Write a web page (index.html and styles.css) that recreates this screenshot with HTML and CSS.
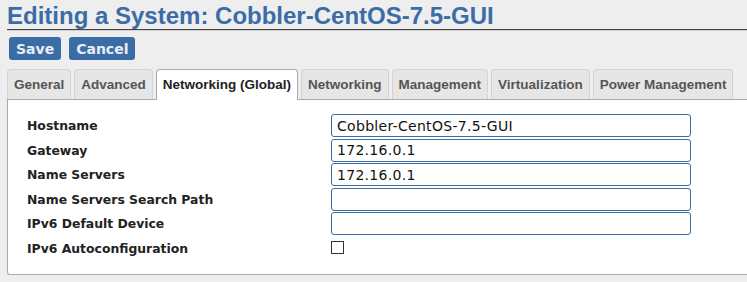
FILE: index.html
```html
<!DOCTYPE html>
<html lang="en">
<head>
  <meta charset="UTF-8" />
  <title>Editing a System</title>
<link rel="stylesheet" href="styles.css">
</head>
<body>

<div class="page">
  <h1 class="title">Editing a System: Cobbler-CentOS-7.5-GUI</h1>

  <div class="actions">
    <button class="btn">Save</button>
    <button class="btn">Cancel</button>
  </div>

  <ul class="tabs">
    <li class="tab">General</li>
    <li class="tab">Advanced</li>
    <li class="tab active">Networking (Global)</li>
    <li class="tab">Networking</li>
    <li class="tab">Management</li>
    <li class="tab">Virtualization</li>
    <li class="tab">Power Management</li>
  </ul>

  <div class="panel">
    <div class="form-grid">
      <label class="field-label">Hostname</label>
      <input class="field" type="text" value="Cobbler-CentOS-7.5-GUI" />

      <label class="field-label">Gateway</label>
      <input class="field" type="text" value="172.16.0.1" />

      <label class="field-label">Name Servers</label>
      <input class="field" type="text" value="172.16.0.1" />

      <label class="field-label">Name Servers Search Path</label>
      <input class="field" type="text" value="" />

      <label class="field-label">IPv6 Default Device</label>
      <input class="field" type="text" value="" />

      <label class="field-label">IPv6 Autoconfiguration</label>
      <input class="check" type="checkbox" />
    </div>
  </div>
</div>

</body>
</html>
```

FILE: styles.css
```css
:root {
  --blue: #3a6ca6;
  --page: #eeeeee;
  --text: #222;
  --tab: #e6e6e6;
  --tab-border: #d3d3d3;
  --panel-border: #aaa;
}

* {
  box-sizing: border-box;
}

body {
  margin: 0;
  padding-left: 7px;
  background-color: var(--page);
  color: var(--text);
  overflow: hidden;
}

/* Titulo */
.title {
  margin: 0;
  padding-top: 2px;
  font-family: "Liberation Sans", Arial, sans-serif;
  font-size: 24px;
  font-weight: bold;
  line-height: 27px;
  color: var(--blue);
  border-bottom: 1px solid #444;
  box-shadow: 0 1px 0 #d2d2d2;
}

.actions {
  display: flex;
  gap: 8px;
  margin: 7px 0 0 2px;
}

.btn {
  height: 23px;
  padding: 0 7px;
  border: none;
  border-radius: 3px;
  background-color: var(--blue);
  color: #e9eef4;
  font-family: "DejaVu Sans", Verdana, sans-serif;
  font-size: 14px;
  font-weight: bold;
  cursor: pointer;
}

/* Abas */
.tabs {
  display: flex;
  align-items: flex-start;
  gap: 3px;
  list-style: none;
  margin: 9px 0 0;
  padding: 0;
  position: relative;
  z-index: 1;
}

.tab {
  height: 30px;
  padding: 0 6px;
  border: 1px solid var(--tab-border);
  border-bottom: none;
  border-radius: 4px 4px 0 0;
  background-color: var(--tab);
  color: #555;
  font-family: "Liberation Sans", Arial, sans-serif;
  font-size: 13.5px;
  font-weight: bold;
  line-height: 29px;
  white-space: nowrap;
  cursor: pointer;
}

.tab.active {
  height: 31px;
  margin-bottom: -1px;
  background-color: #fff;
  border-color: var(--panel-border);
  color: var(--text);
}

/* Painel do formulario (continua alem da borda direita) */
.panel {
  background-color: #fff;
  border: 1px solid var(--panel-border);
  border-right: none;
  border-radius: 0 0 0 3px;
  padding: 14px 19px 13px;
}

.form-grid {
  display: grid;
  grid-template-columns: 304px 360px;
  grid-auto-rows: 24.5px;
  align-items: start;
}

.field-label {
  font-family: "DejaVu Sans", Verdana, sans-serif;
  font-size: 12.4px;
  font-weight: bold;
  line-height: 23px;
  color: var(--text);
}

.field {
  width: 360px;
  height: 23px;
  margin: 0;
  padding: 0 5px;
  border: 1px solid var(--blue);
  border-radius: 3px;
  background-color: #fff;
  color: #111;
  font-family: "DejaVu Sans", Verdana, sans-serif;
  font-size: 14px;
  letter-spacing: 0.3px;
  outline: none;
}

.check {
  appearance: none;
  width: 13px;
  height: 13px;
  margin: 4px 0 0;
  border: 1px solid #333;
  background-color: #fff;
}
```
